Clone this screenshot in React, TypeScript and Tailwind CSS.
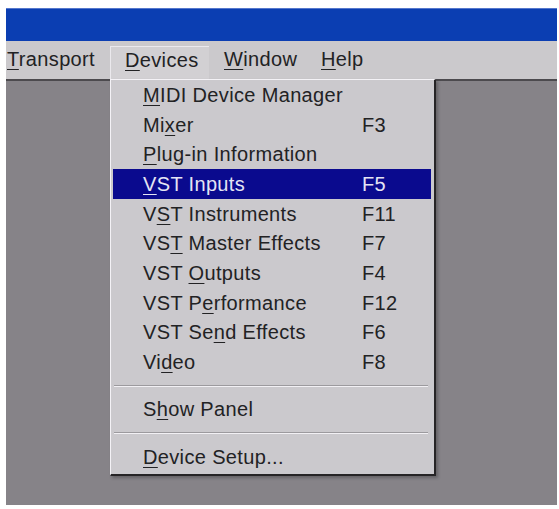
import React from 'react';

type Item = { pre: string; key: string; post: string; shortcut?: string; active?: boolean };

const groups: Item[][] = [
  [
    { pre: '', key: 'M', post: 'IDI Device Manager' },
    { pre: 'Mi', key: 'x', post: 'er', shortcut: 'F3' },
    { pre: '', key: 'P', post: 'lug-in Information' },
    { pre: '', key: 'V', post: 'ST Inputs', shortcut: 'F5', active: true },
    { pre: 'V', key: 'S', post: 'T Instruments', shortcut: 'F11' },
    { pre: 'VS', key: 'T', post: ' Master Effects', shortcut: 'F7' },
    { pre: 'VST ', key: 'O', post: 'utputs', shortcut: 'F4' },
    { pre: 'VST P', key: 'e', post: 'rformance', shortcut: 'F12' },
    { pre: 'VST Se', key: 'n', post: 'd Effects', shortcut: 'F6' },
    { pre: 'Vi', key: 'd', post: 'eo', shortcut: 'F8' },
  ],
  [{ pre: 'S', key: 'h', post: 'ow Panel' }],
  [{ pre: '', key: 'D', post: 'evice Setup...' }],
];

const font = { fontFamily: '"Liberation Sans", Arial, sans-serif' };

function Mnemonic({ pre, k, post }: { pre: string; k: string; post: string }) {
  return (
    <span className="whitespace-pre">
      {pre}
      <span className="underline decoration-1 underline-offset-[3px]">{k}</span>
      {post}
    </span>
  );
}

function Row({ item }: { item: Item }) {
  return (
    <div
      className={
        item.active
          ? 'ml-[2px] mr-[3px] h-[29.7px] flex items-center pl-[30px] bg-[#0a0a8e] text-[#e4e4f4]'
          : 'ml-[2px] mr-[3px] h-[29.7px] flex items-center pl-[30px] text-[#222224]'
      }
    >
      <span className="w-[219px]">
        <Mnemonic pre={item.pre} k={item.key} post={item.post} />
      </span>
      {item.shortcut && <span>{item.shortcut}</span>}
    </div>
  );
}

function Separator() {
  return (
    <div className="h-[17.6px] flex flex-col justify-center pl-[3px] pr-[6px]">
      <div className="h-px bg-[#9c9a9e]" />
      <div className="h-px bg-[#f2f0f4]" />
    </div>
  );
}

export default function App() {
  return (
    <div
      className="relative w-[559px] h-[509px] bg-white flex flex-col pt-[8px] pl-[6px] pr-[2px] pb-[4px] text-[20px] tracking-[0.35px] overflow-hidden"
      style={font}
    >
      <div className="h-[33px] bg-[#0b3eb2] border-t border-[#5577cc]" />

      <div className="h-[38px] bg-[#cbc9cc] flex items-stretch text-[#222224]">
        <div className="w-[104px] flex items-center pl-[1px] pb-[2px]">
          <Mnemonic pre="" k="T" post="ransport" />
        </div>
        <div className="w-[99px] mt-[5px] flex items-center pl-[14px] pb-[7px] bg-[#d2d0d3] border-l border-t border-[#ebe9ed] border-r-[#a9a7ab]">
          <Mnemonic pre="" k="D" post="evices" />
        </div>
        <div className="w-[97px] flex items-center pl-[15px] pb-[2px]">
          <Mnemonic pre="" k="W" post="indow" />
        </div>
        <div className="flex items-center pl-[15px] pb-[2px]">
          <Mnemonic pre="" k="H" post="elp" />
        </div>
      </div>

      <div className="flex-1 bg-[#868388] border-t-2 border-[#4c4a4e]" />

      <div className="absolute left-[110px] top-[79px] w-[326px] bg-[#cbc9cd] border-l border-t border-[#f4f2f6] border-r-2 border-b-2 border-r-[#262426] border-b-[#262426] shadow-[2px_2px_3px_rgba(0,0,0,0.25)] pb-[3px]">
        {groups.map((g, gi) => (
          <React.Fragment key={gi}>
            {gi > 0 && <Separator />}
            {g.map((it, i) => (
              <Row key={i} item={it} />
            ))}
          </React.Fragment>
        ))}
      </div>
    </div>
  );
}
